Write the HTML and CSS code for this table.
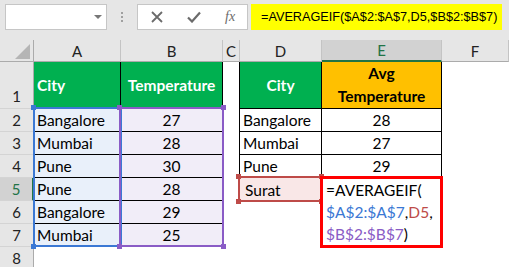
FILE: index.html
```html
<!DOCTYPE html>
<html>
<head>
<meta charset="utf-8">
<link rel="stylesheet" href="styles.css">
</head>
<body>
<div class="toolbar">
  <div class="namebox"><span class="caret"></span></div>
  <div class="grip"><i></i><i></i><i></i></div>
  <div class="fxbox">
    <svg class="ico" width="12" height="12" viewBox="0 0 12 12"><path d="M1 1L11 11M11 1L1 11" stroke="#6b6b6b" stroke-width="1.8" fill="none"/></svg>
    <svg class="ico" width="14" height="12" viewBox="0 0 14 12"><path d="M1 6.5L5 10.5L13 1.5" stroke="#6b6b6b" stroke-width="2.2" fill="none"/></svg>
    <span class="fx">fx</span>
  </div>
  <div class="formula">=AVERAGEIF($A$2:$A$7,D5,$B$2:$B$7)</div>
</div>
<div class="sheet">
  <div class="ch corner"><span class="tri"></span></div>
  <div class="ch">A</div>
  <div class="ch">B</div>
  <div class="ch">C</div>
  <div class="ch">D</div>
  <div class="ch sel">E</div>
  <div class="ch">F</div>

  <div class="rh r1">1</div>
  <div class="c t g">City</div>
  <div class="c t g ctr">Temperature</div>
  <div class="c cb"></div>
  <div class="c t g ctr">City</div>
  <div class="c t o ctr">Avg<br>Temperature</div>
  <div class="c"></div>

  <div class="rh">2</div>
  <div class="c t fa">Bangalore</div>
  <div class="c t fb ctr">27</div>
  <div class="c cb"></div>
  <div class="c t">Bangalore</div>
  <div class="c t ctr">28</div>
  <div class="c"></div>

  <div class="rh">3</div>
  <div class="c t fa">Mumbai</div>
  <div class="c t fb ctr">28</div>
  <div class="c cb"></div>
  <div class="c t">Mumbai</div>
  <div class="c t ctr">27</div>
  <div class="c"></div>

  <div class="rh">4</div>
  <div class="c t fa">Pune</div>
  <div class="c t fb ctr">30</div>
  <div class="c cb"></div>
  <div class="c t">Pune</div>
  <div class="c t ctr">29</div>
  <div class="c"></div>

  <div class="rh rsel">5</div>
  <div class="c t fa">Pune</div>
  <div class="c t fb ctr">28</div>
  <div class="c"></div>
  <div class="c fd">Surat</div>
  <div class="c"></div>
  <div class="c"></div>

  <div class="rh">6</div>
  <div class="c t fa">Bangalore</div>
  <div class="c t fb ctr">29</div>
  <div class="c"></div>
  <div class="c"></div>
  <div class="c"></div>
  <div class="c"></div>

  <div class="rh">7</div>
  <div class="c t fa">Mumbai</div>
  <div class="c t fb ctr">25</div>
  <div class="c"></div>
  <div class="c"></div>
  <div class="c"></div>
  <div class="c"></div>

  <div class="rh">8</div>
  <div class="c"></div>
  <div class="c"></div>
  <div class="c"></div>
  <div class="c"></div>
  <div class="c"></div>
  <div class="c"></div>

  <div class="ref ref-a"><i class="h tl"></i><i class="h bl"></i></div>
  <div class="ref ref-b"><i class="h tl"></i><i class="h tr"></i><i class="h bl"></i><i class="h br"></i></div>
  <div class="ref ref-d"><i class="h tl"></i><i class="h tr"></i><i class="h bl"></i><i class="h br"></i></div>
  <div class="edit">
    <span class="ln">=AVERAGEIF(</span>
    <span class="ln"><span class="kb">$A$2:$A$7</span>,<span class="kr">D5</span>,</span>
    <span class="ln"><span class="kp">$B$2:$B$7</span>)</span>
  </div>
</div>
</body>
</html>
```
FILE: styles.css
```css
html, body {
  margin: 0;
  padding: 0;
  background: #e6e6e6;
  overflow: hidden;
}
body {
  width: 509px;
  height: 267px;
  font-family: "Lato", "Liberation Sans", sans-serif;
}
.toolbar {
  height: 40px;
  box-sizing: border-box;
  padding: 4px 0 0 5px;
  display: flex;
  align-items: flex-start;
}
.namebox {
  width: 102px;
  height: 26px;
  box-sizing: border-box;
  background: #fff;
  border: 1px solid #c6c6c6;
  position: relative;
}
.caret {
  position: absolute;
  left: 88px;
  top: 10px;
  width: 0;
  height: 0;
  border-left: 4px solid transparent;
  border-right: 4px solid transparent;
  border-top: 4px solid #777;
}
.grip {
  width: 30px;
  height: 26px;
  display: flex;
  flex-direction: column;
  align-items: center;
  justify-content: center;
  gap: 2px;
}
.grip i {
  display: block;
  width: 2px;
  height: 2px;
  background: #a0a0a0;
}
.fxbox {
  width: 111px;
  height: 26px;
  box-sizing: border-box;
  background: #fff;
  border: 1px solid #c6c6c6;
  display: flex;
  align-items: center;
  padding-left: 13px;
  gap: 24px;
}
.fx {
  font-family: "Liberation Serif", serif;
  font-style: italic;
  font-size: 14px;
  color: #6b6b6b;
  margin-left: 0;
}
.formula {
  margin-left: 3px;
  width: 251px;
  height: 26px;
  box-sizing: border-box;
  background: #ffff00;
  font-family: "Liberation Sans", sans-serif;
  font-size: 12.7px;
  line-height: 26px;
  padding-left: 10px;
  color: #000;
  white-space: nowrap;
}
.sheet {
  position: relative;
  display: grid;
  grid-template-columns: 34px 87px 102px 17px 82px 120px 1fr;
  grid-template-rows: 22px 47px repeat(7, 23px);
  background: #fff;
  font-size: 15.5px;
  color: #000;
}
.ch {
  background: #e6e6e6;
  border-right: 1px solid #c4c4c4;
  border-bottom: 1px solid #ababab;
  box-sizing: border-box;
  display: flex;
  align-items: center;
  justify-content: center;
  color: #222;
  font-size: 15px;
}
.corner {
  position: relative;
  border-right-color: #ababab;
}
.tri {
  position: absolute;
  right: 3px;
  bottom: 2px;
  width: 0;
  height: 0;
  border-left: 15px solid transparent;
  border-bottom: 15px solid #b5b5b5;
}
.ch.sel {
  background: #d2d2d2;
  color: #217346;
  border-bottom: 2px solid #217346;
}
.rh {
  background: #e6e6e6;
  border-right: 1px solid #ababab;
  border-bottom: 1px solid #d4d4d4;
  box-sizing: border-box;
  display: flex;
  align-items: center;
  justify-content: center;
  color: #222;
  font-size: 15px;
}
.rh.r1 {
  align-items: flex-end;
  padding-bottom: 3px;
}
.rh.rsel {
  background: #d2d2d2;
  color: #217346;
  border-right: 2px solid #217346;
}
.c {
  box-sizing: border-box;
  display: flex;
  align-items: center;
  padding-left: 3px;
  white-space: nowrap;
}
.t {
  border-right: 1px solid #000;
  border-bottom: 1px solid #000;
}
.cb {
  border-right: 1px solid #000;
}
.ctr {
  justify-content: center;
  text-align: center;
  padding-left: 0;
}
.g {
  background: #00b050;
  color: #fff;
  font-weight: bold;
}
.o {
  background: #ffc000;
  font-weight: bold;
  line-height: 23px;
}
.fa { background: #e9f0fa; }
.fb { background: #f1edf8; }
.fd { background: #f9e7e7; padding-left: 5px; }
.ref {
  position: absolute;
  box-sizing: border-box;
  border: 2px solid;
}
.ref-a {
  left: 33px;
  top: 67px;
  width: 89px;
  height: 140px;
  border-color: #3b78d4;
}
.ref-b {
  left: 119px;
  top: 67px;
  width: 105px;
  height: 140px;
  border-color: #8a5cc6;
}
.ref-d {
  left: 238px;
  top: 136px;
  width: 84px;
  height: 26px;
  border-color: #be4b48;
}
.h {
  position: absolute;
  width: 5px;
  height: 5px;
}
.ref-a .h { background: #3b78d4; }
.ref-b .h { background: #8a5cc6; }
.ref-d .h { background: #be4b48; }
.tl { left: -4px; top: -4px; }
.tr { right: -4px; top: -4px; }
.bl { left: -4px; bottom: -4px; }
.br { right: -4px; bottom: -4px; }
.edit {
  position: absolute;
  left: 320px;
  top: 136px;
  width: 123px;
  height: 72px;
  box-sizing: border-box;
  border: 3px solid #ff0000;
  background: #fff;
  padding: 0 0 0 3px;
  display: flex;
  flex-direction: column;
  font-size: 15.5px;
  line-height: 22px;
  white-space: nowrap;
}
.kb { color: #3b78d4; }
.kr { color: #be4b48; }
.kp { color: #8a5cc6; }
```
